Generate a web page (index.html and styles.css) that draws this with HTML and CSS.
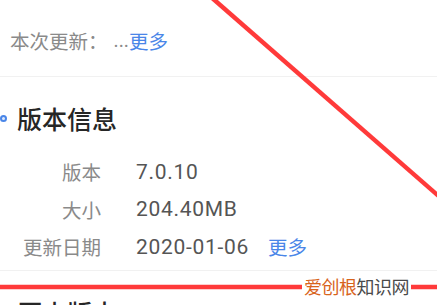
FILE: index.html
```html
<!DOCTYPE html>
<html lang="zh-CN">
<head>
<meta charset="utf-8">
<link rel="stylesheet" href="styles.css">
</head>
<body>
<div class="page">
  <div class="update">
    <span class="update-label">本次更新：</span><span class="ellipsis">...</span><a class="more">更多</a>
  </div>
  <div class="section">
    <div class="section-title"><span class="dot"></span>版本信息</div>
    <div class="info">
      <div class="row"><span class="label">版本</span><span class="value">7.0.10</span></div>
      <div class="row"><span class="label">大小</span><span class="value">204.40MB</span></div>
      <div class="row"><span class="label">更新日期</span><span class="value">2020-01-06</span><a class="more more-date">更多</a></div>
    </div>
  </div>
  <div class="section">
    <div class="section-title">历史版本</div>
  </div>

  <svg class="marks" width="437" height="305" viewBox="0 0 437 305">
    <line x1="211" y1="-3" x2="442" y2="199" stroke="#ff3a3a" stroke-width="4.5"/>
    <line x1="0" y1="287" x2="437" y2="287" stroke="#ff3a3a" stroke-width="4.5"/>
  </svg>
  <div class="watermark"><span class="wm-a">爱创根</span><span class="wm-b">知识网</span></div>
</div>
</body>
</html>
```

FILE: styles.css
```css
* { box-sizing: border-box; }
html, body { margin: 0; padding: 0; background: #fff; }
body {
  font-family: "Noto Sans CJK SC", "Noto Sans", sans-serif;
  width: 437px;
  height: 305px;
  overflow: hidden;
}
.page {
  position: relative;
  width: 437px;
  height: 305px;
  overflow: hidden;
}
.update {
  height: 77px;
  padding: 4px 0 0 10px;
  display: flex;
  align-items: center;
  font-size: 19.5px;
  color: #8a8a8a;
  border-bottom: 1px solid #f1f1f1;
}
.ellipsis { margin-left: 6px; font-family: Roboto, sans-serif; }
.more { color: #4a86e8; }
.section {
  border-bottom: 1px solid #f1f1f1;
}
.section-title {
  margin-top: 16px;
  height: 50px;
  display: flex;
  align-items: center;
  padding-left: 17px;
  font-size: 25px;
  font-weight: 500;
  color: #262626;
  position: relative;
}
.dot {
  position: absolute;
  left: 0;
  top: 22px;
  width: 7px;
  height: 7px;
  border: 2px solid #4a86e8;
  border-radius: 50%;
  background: #dfe9fb;
}
.info {
  padding-top: 10px;
  padding-bottom: 4px;
}
.row {
  height: 37.5px;
  display: flex;
  align-items: center;
  font-size: 19.5px;
}
.label {
  width: 101px;
  text-align: right;
  color: #8a8a8a;
}
.value {
  margin-left: 35px;
  color: #555;
  font-family: Roboto, "Noto Sans CJK SC", sans-serif;
  font-size: 21px;
  letter-spacing: 0.7px;
}
.more-date { margin-left: 19px; }
.marks {
  position: absolute;
  left: 0;
  top: 0;
}
.watermark {
  position: absolute;
  left: 302px;
  top: 273px;
  height: 26px;
  padding: 0 2px;
  background: #fff;
  font-size: 18px;
  line-height: 26px;
  letter-spacing: -0.5px;
}
.wm-a { color: #d8641c; }
.wm-b { color: #4a4a4a; }
```
